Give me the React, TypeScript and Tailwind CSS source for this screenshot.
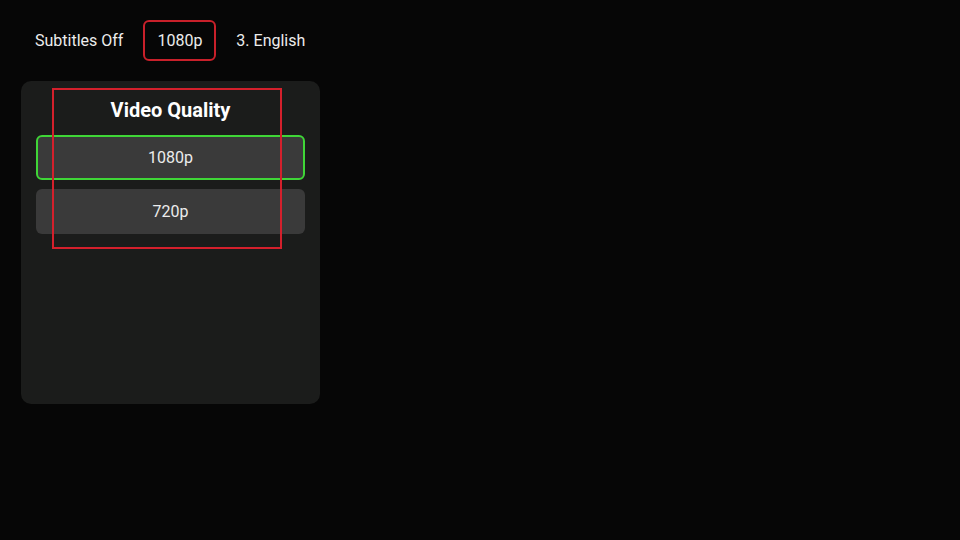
export default function App() {
  const tabs = [
    { label: "Subtitles Off", active: false },
    { label: "1080p", active: true },
    { label: "3. English", active: false },
  ];
  const options = [
    { label: "1080p", focused: true },
    { label: "720p", focused: false },
  ];

  return (
    <div className="relative h-[540px] w-[960px] overflow-hidden bg-[#060606] font-['Roboto',sans-serif] text-[#ececec]">
      <div className="flex flex-col gap-5 pl-[21px] pt-[20px]">
        <div className="flex items-center gap-[6px]">
          {tabs.map((t) => (
            <div
              key={t.label}
              className={
                "flex h-[41px] items-center rounded-[6px] border-2 px-3 pt-[1px] text-[16px] " +
                (t.active ? "border-[#c8202a]" : "border-transparent")
              }
            >
              {t.label}
            </div>
          ))}
        </div>

        <div className="relative flex h-[323px] w-[299px] flex-col rounded-[10px] bg-[#1b1c1b] px-[15px] pt-[15px]">
          <div className="text-center text-[20px] font-bold leading-[28px] text-white">Video Quality</div>
          <div className="mt-[11px] flex flex-col gap-[9px]">
            {options.map((o) => (
              <div
                key={o.label}
                className={
                  "flex h-[45px] items-center justify-center rounded-[6px] border-2 bg-[#3a3a3a] pt-[1px] text-[16px] " +
                  (o.focused ? "border-[#3fd637]" : "border-transparent")
                }
              >
                {o.label}
              </div>
            ))}
          </div>
          <div className="pointer-events-none absolute left-[31px] top-[7px] h-[161px] w-[230px] border-2 border-[#d4202c]" />
        </div>
      </div>
    </div>
  );
}
